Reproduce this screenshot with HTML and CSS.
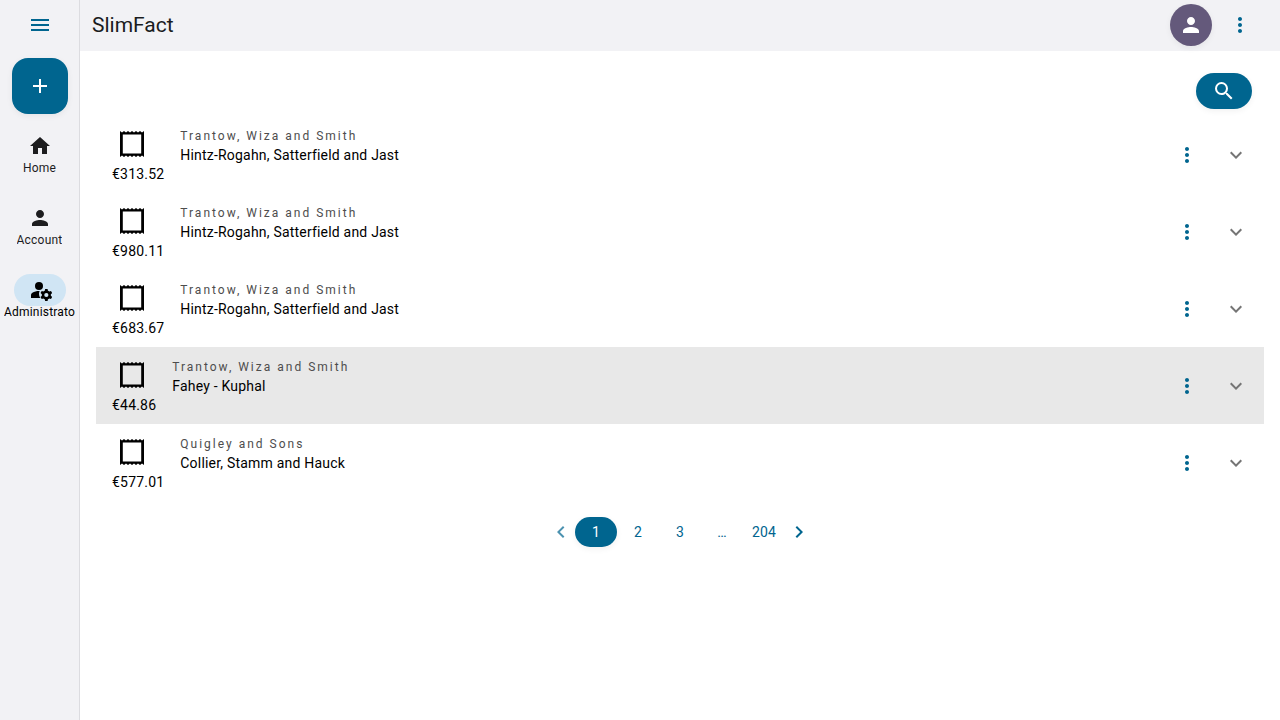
FILE: index.html
```html
<!DOCTYPE html>
<html lang="en">
<head>
<meta charset="utf-8">
<meta name="viewport" content="width=device-width, initial-scale=1">
<title>SlimFact</title>
<link rel="stylesheet" href="styles.css">
</head>
<body>
<svg class="sprite" aria-hidden="true">
  <symbol id="i-person" viewBox="0 0 24 24"><path d="M12 12c2.210 0 4-1.790 4-4s-1.790-4-4-4-4 1.790-4 4 1.790 4 4 4zm0 2c-2.670 0-8 1.340-8 4v2h16v-2c0-2.660-5.330-4-8-4z"/></symbol>
  <symbol id="i-more" viewBox="0 0 24 24"><path d="M12 8c1.100 0 2-.9 2-2s-.9-2-2-2-2 .9-2 2 .9 2 2 2zm0 2c-1.100 0-2 .9-2 2s.9 2 2 2 2-.9 2-2-.9-2-2-2zm0 6c-1.100 0-2 .9-2 2s.9 2 2 2 2-.9 2-2-.9-2-2-2z"/></symbol>
  <symbol id="i-down" viewBox="0 0 24 24"><path d="M7.410 8.590 12 13.170l4.590-4.580L18 10l-6 6-6-6z"/></symbol>
  <symbol id="i-left" viewBox="0 0 24 24"><path d="M15.410 7.410 14 6l-6 6 6 6 1.410-1.410L10.830 12z"/></symbol>
  <symbol id="i-right" viewBox="0 0 24 24"><path d="M10 6 8.590 7.410 13.170 12l-4.580 4.590L10 18l6-6z"/></symbol>
  <symbol id="i-receipt" viewBox="0 0 24 26"><path fill-rule="evenodd" d="M0 0l2 1.600 2-1.600 2 1.600 2-1.600 2 1.600 2-1.600 2 1.600 2-1.600 2 1.600 2-1.600 2 1.600 2-1.600v26l-2-1.600-2 1.600-2-1.600-2 1.600-2-1.600-2 1.600-2-1.600-2 1.600-2-1.600-2 1.600-2-1.600-2 1.600zM2.800 3.600v18.800h18.400V3.600z"/></symbol>
</svg>
<div class="app">
  <nav class="rail" aria-label="Main">
    <button class="menu" aria-label="Menu"><svg class="icon" viewBox="0 0 24 24"><path d="M3 6h18v2H3zm0 5h18v2H3zm0 5h18v2H3z"/></svg></button>
    <button class="add" aria-label="Add"><svg class="icon" viewBox="0 0 24 24"><path d="M19 13h-6v6h-2v-6H5v-2h6V5h2v6h6z"/></svg></button>
    <div class="destinations">
      <a class="dest" href="#home"><span class="pill"><svg class="icon" viewBox="0 0 24 24"><path d="M10 20v-6h4v6h5v-8h3L12 3 2 12h3v8z"/></svg></span><span class="dest-label">Home</span></a>
      <a class="dest" href="#account"><span class="pill"><svg class="icon"><use href="#i-person"/></svg></span><span class="dest-label">Account</span></a>
      <a class="dest active" href="#administrator"><span class="pill"><svg class="icon" viewBox="0 0 24 24"><circle cx="11" cy="8" r="4"/><path d="M11.600 13.020C11.400 13.010 11.200 13 11 13c-2.420 0-4.680.67-6.610 1.820C3.510 15.340 3 16.320 3 17.350V20h9.300A6.960 6.960 0 0 1 11 16c0-1.070.2-2.070.6-2.980z"/><path d="M22.900 17c0-.27-.04-.52-.08-.77l1.380-1.220-1.200-2.100-1.760.6c-.38-.33-.82-.58-1.300-.76L19.570 11h-2.440l-.36 1.750c-.48.180-.92.430-1.300.76l-1.760-.6-1.200 2.100 1.380 1.220c-.04.250-.08.500-.08.770s.04.520.08.770l-1.380 1.220 1.200 2.100 1.760-.6c.38.330.82.580 1.300.76l.36 1.750h2.440l.37-1.750c.48-.18.92-.43 1.300-.76l1.760.6 1.200-2.100-1.380-1.220c.04-.25.080-.5.080-.77zM18.350 19.100a2.100 2.100 0 1 1 0-4.200 2.100 2.100 0 0 1 0 4.200z"/></svg></span><span class="dest-label">Administrator</span></a>
    </div>
  </nav>
  <div class="page">
    <header class="topbar">
      <h1 class="title">SlimFact</h1>
      <button class="avatar" aria-label="Profile"><svg class="icon"><use href="#i-person"/></svg></button>
      <button class="more" aria-label="More options"><svg class="icon"><use href="#i-more"/></svg></button>
    </header>
    <main class="content">
      <div class="tools"><button class="search" aria-label="Search"><svg class="icon" viewBox="0 0 24 24"><path d="M15.500 14h-.79l-.28-.27A6.470 6.470 0 0 0 16 9.500 6.500 6.500 0 1 0 9.500 16c1.610 0 3.090-.59 4.230-1.570l.27.28v.79l5 4.990L20.490 19zm-6 0C7.010 14 5 11.990 5 9.500S7.010 5 9.500 5 14 7.010 14 9.500 11.990 14 9.500 14z"/></svg></button></div>
      <ul class="list">
        <li class="row">
          <div class="amount"><svg class="receipt"><use href="#i-receipt"/></svg><span>€313.52</span></div>
          <div class="info"><span class="overline">Trantow, Wiza and Smith</span><span>Hintz-Rogahn, Satterfield and Jast</span></div>
          <button class="more" aria-label="Actions"><svg class="icon"><use href="#i-more"/></svg></button>
          <button class="expand" aria-label="Expand"><svg class="icon"><use href="#i-down"/></svg></button>
        </li>
        <li class="row">
          <div class="amount"><svg class="receipt"><use href="#i-receipt"/></svg><span>€980.11</span></div>
          <div class="info"><span class="overline">Trantow, Wiza and Smith</span><span>Hintz-Rogahn, Satterfield and Jast</span></div>
          <button class="more" aria-label="Actions"><svg class="icon"><use href="#i-more"/></svg></button>
          <button class="expand" aria-label="Expand"><svg class="icon"><use href="#i-down"/></svg></button>
        </li>
        <li class="row">
          <div class="amount"><svg class="receipt"><use href="#i-receipt"/></svg><span>€683.67</span></div>
          <div class="info"><span class="overline">Trantow, Wiza and Smith</span><span>Hintz-Rogahn, Satterfield and Jast</span></div>
          <button class="more" aria-label="Actions"><svg class="icon"><use href="#i-more"/></svg></button>
          <button class="expand" aria-label="Expand"><svg class="icon"><use href="#i-down"/></svg></button>
        </li>
        <li class="row selected">
          <div class="amount"><svg class="receipt"><use href="#i-receipt"/></svg><span>€44.86</span></div>
          <div class="info"><span class="overline">Trantow, Wiza and Smith</span><span>Fahey - Kuphal</span></div>
          <button class="more" aria-label="Actions"><svg class="icon"><use href="#i-more"/></svg></button>
          <button class="expand" aria-label="Expand"><svg class="icon"><use href="#i-down"/></svg></button>
        </li>
        <li class="row">
          <div class="amount"><svg class="receipt"><use href="#i-receipt"/></svg><span>€577.01</span></div>
          <div class="info"><span class="overline">Quigley and Sons</span><span>Collier, Stamm and Hauck</span></div>
          <button class="more" aria-label="Actions"><svg class="icon"><use href="#i-more"/></svg></button>
          <button class="expand" aria-label="Expand"><svg class="icon"><use href="#i-down"/></svg></button>
        </li>
      </ul>
      <nav class="pager" aria-label="Pages">
        <button class="step" disabled aria-label="Previous page"><svg class="icon"><use href="#i-left"/></svg></button>
        <button class="num current" aria-current="page">1</button>
        <button class="num">2</button>
        <button class="num">3</button>
        <button class="num">…</button>
        <button class="num">204</button>
        <button class="step" aria-label="Next page"><svg class="icon"><use href="#i-right"/></svg></button>
      </nav>
    </main>
  </div>
</div>
</body>
</html>
```
FILE: styles.css
```css
* { box-sizing: border-box; }
body {
  margin: 0;
  background: #fff;
  color: #000;
  font: 14px/20px Roboto, sans-serif;
}
button {
  display: flex;
  align-items: center;
  justify-content: center;
  flex: none;
  margin: 0;
  padding: 0;
  border: 0;
  background: none;
  color: #00658f;
  font: inherit;
}
a { color: inherit; text-decoration: none; }
.sprite { display: none; }
.icon { display: block; width: 24px; height: 24px; fill: currentColor; }
.app { display: flex; min-height: 100vh; }

.rail {
  display: flex;
  flex: none;
  flex-direction: column;
  align-items: center;
  width: 80px;
  border-right: 1px solid #dcdce0;
  background: #f2f2f5;
}
.menu { width: 48px; height: 50px; }
.add {
  width: 56px;
  height: 56px;
  margin-top: 8px;
  border-radius: 16px;
  background: #00658f;
  color: #fff;
  box-shadow: 0 2px 6px rgba(0, 0, 0, 0.06);
}
.destinations {
  display: flex;
  flex-direction: column;
  gap: 24px;
  width: 100%;
  margin-top: 16px;
  padding: 0 4px;
}
.dest {
  display: flex;
  flex-direction: column;
  align-items: center;
  color: #1d1d1f;
  font-size: 12px;
  line-height: 16px;
}
.pill {
  display: flex;
  align-items: center;
  justify-content: center;
  width: 52px;
  height: 32px;
  border-radius: 16px;
}
.dest-label {
  max-width: 100%;
  overflow: hidden;
  margin-top: -2px;
  padding-bottom: 2px;
  letter-spacing: 0.2px;
  white-space: nowrap;
}
.active { color: #000; }
.active .pill { background: #d0e5f4; }

.page { display: flex; flex: 1; flex-direction: column; min-width: 0; }
.topbar {
  display: flex;
  align-items: center;
  height: 51px;
  padding: 0 12px 1px;
  background: #f2f2f5;
}
.title {
  flex: 1;
  margin: 0;
  color: #1a1c1e;
  font-size: 21px;
  font-weight: 400;
  line-height: 28px;
}
.avatar {
  width: 42px;
  height: 42px;
  border-radius: 50%;
  background: #64597b;
  color: #fff;
  box-shadow: 0 2px 6px rgba(0, 0, 0, 0.06);
}
.more { width: 56px; height: 42px; }

.content { display: flex; flex-direction: column; padding: 0 16px; }
.tools { display: flex; justify-content: flex-end; padding: 22px 12px 7px; }
.search {
  width: 56px;
  height: 36px;
  border-radius: 18px;
  background: #00658f;
  color: #fff;
  box-shadow: 0 2px 6px rgba(0, 0, 0, 0.06);
}
.list { margin: 0; padding: 0; list-style: none; }
.row { display: flex; align-items: center; min-height: 77px; padding: 8px 16px; }
.selected { background: #e8e8e8; }
.amount {
  display: flex;
  flex: none;
  flex-direction: column;
  gap: 7px;
  padding: 6px 16px 0 0;
  letter-spacing: 0.2px;
}
.receipt { width: 24px; height: 26px; margin-left: 8px; }
.info {
  display: flex;
  flex: 1;
  flex-direction: column;
  min-width: 0;
  padding-bottom: 18px;
  letter-spacing: 0.2px;
}
.overline { color: #4d4d4d; font-size: 12px; line-height: 18px; letter-spacing: 2px; }
.row .more { width: 42px; }
.expand { width: 24px; height: 42px; margin-left: 16px; color: #757575; }

.pager { display: flex; align-items: center; justify-content: center; margin-top: 16px; }
.num { min-width: 42px; height: 30px; border-radius: 15px; letter-spacing: 0.2px; }
.current { background: #00658f; color: #fff; box-shadow: 0 2px 6px rgba(0, 0, 0, 0.06); }
.step { width: 28px; height: 30px; }
.step:disabled { opacity: 0.7; }
```
